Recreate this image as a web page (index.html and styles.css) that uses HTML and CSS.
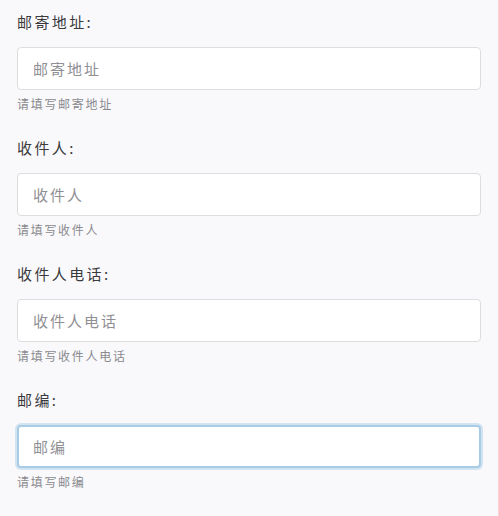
FILE: index.html
```html
<!DOCTYPE html>
<html lang="zh-CN">
<head>
  <meta charset="UTF-8">
  <meta name="viewport" content="width=device-width, initial-scale=1.0">
  <title>收货信息</title>
  <link rel="stylesheet" href="styles.css">
</head>
<body>
  <form class="address-form">
    <div class="field">
      <label for="address">邮寄地址:</label>
      <input type="text" id="address" placeholder="邮寄地址">
      <p class="help">请填写邮寄地址</p>
    </div>

    <div class="field">
      <label for="receiver">收件人:</label>
      <input type="text" id="receiver" placeholder="收件人">
      <p class="help">请填写收件人</p>
    </div>

    <div class="field">
      <label for="phone">收件人电话:</label>
      <input type="tel" id="phone" placeholder="收件人电话">
      <p class="help">请填写收件人电话</p>
    </div>

    <div class="field">
      <label for="zipcode">邮编:</label>
      <input type="text" id="zipcode" class="focused" placeholder="邮编">
      <p class="help">请填写邮编</p>
    </div>
  </form>
</body>
</html>
```

FILE: styles.css
```css
body {
  margin: 0;
  font-family: "Noto Sans CJK SC", "Noto Sans", sans-serif;
  background-color: #ffffff;
}

.address-form {
  width: 499px;
  min-height: 516px;
  box-sizing: border-box;
  padding: 11px 17px 0 17px;
  background-color: #f9f9fc;
  border-right: 1px solid #ffd2d2;
  display: flex;
  flex-direction: column;
  gap: 25px;
}

.field {
  display: flex;
  flex-direction: column;
}

.field label {
  font-size: 15px;
  line-height: 22px;
  letter-spacing: 2.4px;
  color: #3a3a3c;
  margin-bottom: 14px;
}

.field input {
  width: 464px;
  height: 43px;
  box-sizing: border-box;
  padding: 0 15px;
  border: 1px solid #dddde0;
  border-radius: 4px;
  background: white;
  font-family: inherit;
  font-size: 15px;
  letter-spacing: 2px;
  color: #333;
  outline: none;
}

.field input::placeholder {
  color: #8f8f94;
}

.field input.focused {
  border: 2px solid #a9cce6;
  box-shadow: 0 0 0 2px #d2e4f2;
  padding: 0 14px;
}

.help {
  margin: 6px 0 0 0;
  font-size: 12px;
  line-height: 16px;
  letter-spacing: 1.7px;
  color: #8a8a8e;
}
```
